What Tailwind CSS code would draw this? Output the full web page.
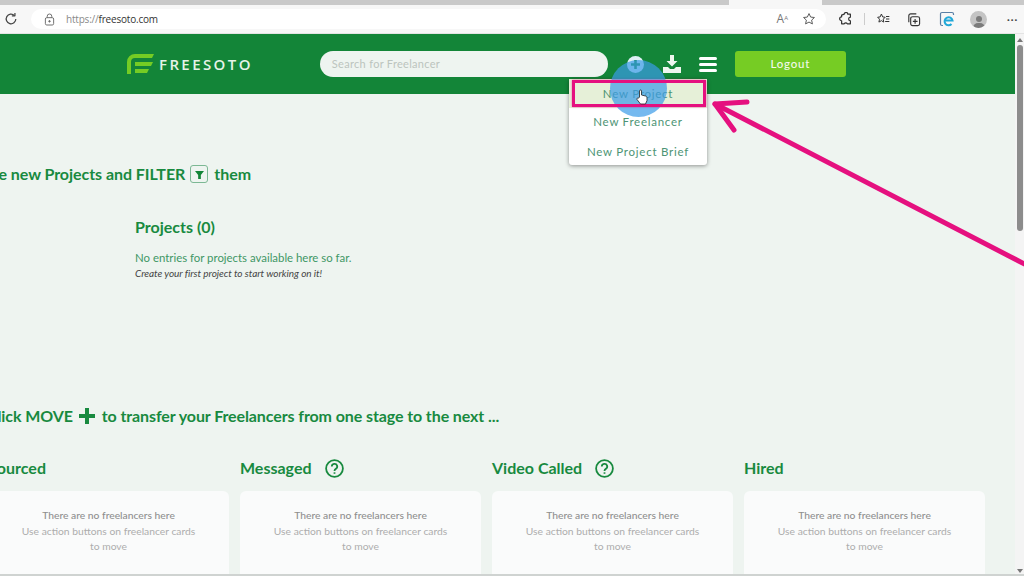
<!DOCTYPE html>
<html lang="en">
<head>
  <meta charset="UTF-8">
  <meta name="viewport" content="width=device-width, initial-scale=1.0">
  <title>Freesoto</title>
  <script src="https://cdn.jsdelivr.net/npm/@tailwindcss/browser@4"></script>
</head>
<body class="relative w-[1024px] h-[576px] overflow-hidden bg-[#eef4f0] font-['Lato',sans-serif]">

  <!-- Browser chrome -->
  <div class="h-[34px] bg-[#f7f7f7] border-b border-[#e4e4e4] flex flex-col">
    <div class="h-[5px] flex bg-[#c9c9c9]">
      <div class="w-[729px]"></div>
      <div class="w-[93px] bg-[#f7f7f7]"></div>
    </div>
    <div class="flex-1 flex items-center">
      <svg class="ml-[4px] w-[14px] h-[14px] text-[#444]" viewBox="0 0 16 16" fill="none" stroke="currentColor" stroke-width="1.4"><path d="M13.5 8a5.5 5.5 0 1 1-1.7-4"/><path d="M12.5 1v3.4H9" stroke-linejoin="round"/></svg>
      <div class="ml-[13px] w-[795px] h-[20px] bg-white rounded-full flex items-center pl-[13px] pr-[10px]">
        <svg class="w-[11px] h-[13px] text-[#666]" viewBox="0 0 12 14" fill="none" stroke="currentColor" stroke-width="1"><rect x="1.5" y="5" width="9" height="8" rx="1.5"/><path d="M3.5 5V3.5a2.5 2.5 0 0 1 5 0V5"/><circle cx="6" cy="9" r=".8" fill="currentColor"/></svg>
        <span class="ml-[11px] text-[10px] tracking-[-0.2px] font-['Open_Sans',sans-serif] text-[#8a8a8a]">https://<span class="text-[#333]">freesoto.com</span></span>
        <span class="ml-auto text-[12px] text-[#777] font-['Open_Sans',sans-serif]">A<sup class="text-[6px]">A</sup></span>
        <svg class="ml-[14px] w-[14px] h-[14px] text-[#555]" viewBox="0 0 16 16" fill="none" stroke="currentColor" stroke-width="1.1" stroke-linejoin="round"><path d="M8 1.8l1.9 4 4.3.5-3.2 3 .9 4.3L8 11.5l-3.9 2.1.9-4.3-3.2-3 4.3-.5z"/></svg>
      </div>
      <svg class="ml-[13px] w-[14px] h-[14px] text-[#333]" viewBox="0 0 16 16" fill="none" stroke="currentColor" stroke-width="1.4" stroke-linejoin="round"><path d="M6 2.5a2 2 0 0 1 4 0h3v3.5a2 2 0 0 0 0 4v3.5H9.500a2 2 0 0 0-3.500 0H3V10a2.200 2.200 0 0 1 0-4.500V3.500z"/></svg>
      <div class="ml-[11px] w-px h-[12px] bg-[#ccc]"></div>
      <svg class="ml-[11px] w-[15px] h-[14px] text-[#333]" viewBox="0 0 18 16" fill="none" stroke="currentColor" stroke-width="1.2" stroke-linejoin="round"><path d="M6.500 2l1.500 3.500 3 .4-2.300 2.300.6 3.500L6.500 10l-3 1.700.7-3.500L2 5.900l3-.4z"/><path d="M12 5h4M12 8h4M11 11h5"/></svg>
      <svg class="ml-[15px] w-[15px] h-[15px] text-[#333]" viewBox="0 0 16 16" fill="none" stroke="currentColor" stroke-width="1.2"><rect x="5" y="5" width="9.500" height="9.500" rx="2"/><path d="M3 11V4a2 2 0 0 1 2-2h6M9.700 7.500v5M7.300 10h5"/></svg>
      <svg class="ml-[18px] w-[16px] h-[16px]" viewBox="0 0 16 16" fill="none"><path d="M4 14.500H3A1.500 1.500 0 0 1 1.500 13V3A1.500 1.500 0 0 1 3 1.500h10A1.500 1.500 0 0 1 14.500 3v1" stroke="#5a7fa5" stroke-width="1.200"/><path d="M6 9.500h7.500A4 4 0 1 0 12.500 13" stroke="#21a8d8" stroke-width="2"/></svg>
      <div class="ml-[15px] w-[17px] h-[17px] rounded-full bg-[#c4c4c4] flex flex-col items-center justify-end overflow-hidden">
        <div class="w-[6px] h-[6px] rounded-full bg-[#7b7b7b]"></div>
        <div class="mt-[1px] w-[12px] h-[5px] rounded-t-full bg-[#7b7b7b]"></div>
      </div>
      <span class="ml-[20px] text-[10px] font-bold leading-none tracking-[1px] text-[#444]">···</span>
    </div>
  </div>

  <div class="flex h-[542px]">
    <div class="w-[1015px] flex flex-col overflow-hidden">
      <!-- Site header -->
      <header class="h-[60px] shrink-0 bg-[#138538] flex items-center">
        <svg class="ml-[127px] w-[27px] h-[20px]" viewBox="0 0 27 20" fill="#75cc24">
          <path d="M0 20V8a8 8 0 0 1 8-8h19l-2 4H8a4 4 0 0 0-4 4v12z"/>
          <path d="M8 8h18l-2 4H8zM8 15h14l-2 4H8z"/>
        </svg>
        <span class="ml-[5px] text-[15px] font-semibold tracking-[2.400px] text-[#e6f3e8] font-['Open_Sans',sans-serif]">FREESOTO</span>
        <div class="ml-[67px] w-[288px] h-[26px] rounded-full bg-[#eef4f0] flex items-center pl-[12px] text-[11px] tracking-[0.3px] text-[#bcc4be]">Search for Freelancer</div>
        <svg class="ml-[19px] w-[17px] h-[17px]" viewBox="0 0 17 17"><circle cx="8.500" cy="8.500" r="8.500" fill="#dff0f5"/><path d="M8.500 4v9M4 8.500h9" stroke="#138538" stroke-width="2.600"/></svg>
        <svg class="ml-[19px] w-[18px] h-[18px]" viewBox="0 0 18 18" fill="#eef6ef"><path d="M7 0h4v6h3.500L9 11.500 3.500 6H7z"/><path d="M0 12h5l2 2h4l2-2h5v6H0z"/></svg>
        <div class="ml-[18px] w-[18px] flex flex-col gap-[3px]">
          <div class="h-[3px] bg-white rounded-sm"></div>
          <div class="h-[3px] bg-white rounded-sm"></div>
          <div class="h-[3px] bg-white rounded-sm"></div>
        </div>
        <button class="ml-[18px] w-[111px] h-[26px] rounded-[3px] bg-[#76cc24] text-[11.500px] font-medium tracking-[0.8px] text-[#f2f9ea]">Logout</button>
      </header>

      <!-- Page content -->
      <main class="flex-1 flex flex-col">
        <div class="mt-[68px] w-[251px] h-[24px] flex justify-end items-center whitespace-nowrap text-[16px] font-bold leading-none tracking-[-0.05px] text-[#188a3f] overflow-hidden shrink-0">
          <span>Browse new Projects and FILTER</span>
          <span class="ml-[5px] mr-[6px] w-[18px] h-[18px] shrink-0 rounded-[3px] border border-[#7cb894] flex items-center justify-center">
            <svg class="w-[9px] h-[9px]" viewBox="0 0 10 10" fill="#138538"><path d="M0 1h10L6.500 5.500V10h-3V5.500z"/></svg>
          </span>
          <span>them</span>
        </div>

        <div class="ml-[135px] mt-[29px]">
          <h2 class="text-[16px] font-bold leading-[24px] text-[#188a3f]">Projects (0)</h2>
          <p class="mt-[11px] text-[11.400px] leading-[16px] text-[#3f9766]">No entries for projects available here so far.</p>
          <p class="text-[10px] leading-[14px] italic tracking-[-0.05px] text-[#444]">Create your first project to start working on it!</p>
        </div>

        <div class="mt-[124px] -ml-[13px] flex items-center whitespace-nowrap text-[16px] font-bold leading-[24px] tracking-[-0.1px] text-[#188a3f]">
          <span>Click MOVE</span>
          <svg class="ml-[6px] mr-[7px] w-[16px] h-[16px]" viewBox="0 0 16 16" fill="#188a3f"><path d="M6 0h4v6h6v4h-6v6H6v-6H0V6h6z"/></svg>
          <span>to transfer your Freelancers from one stage to the next ...</span>
        </div>

        <!-- Stage columns -->
        <div class="mt-[28px] -ml-[12px] w-[997px] grid grid-cols-4 gap-x-[11px]">
          <div>
            <h3 class="h-[24px] flex justify-end pr-[183px] text-[16px] font-bold leading-[24px] text-[#188a3f]">Sourced</h3>
            <div class="mt-[11px] h-[90px] rounded-t-[6px] bg-[#fafbfb] pt-[17px] px-[28px] text-center text-[10.300px] leading-[15.500px]">
              <p class="font-medium text-[#8f8f8f]">There are no freelancers here</p>
              <p class="text-[#adadad]">Use action buttons on freelancer cards to move</p>
            </div>
          </div>
          <div>
            <h3 class="h-[24px] flex items-center text-[16px] font-bold leading-[24px] text-[#188a3f]">Messaged
              <svg class="ml-[13px] w-[19px] h-[19px]" viewBox="0 0 19 19" fill="none" stroke="#188a3f" stroke-width="1.800"><circle cx="9.500" cy="9.500" r="8.400"/><path d="M6.800 7.500a2.700 2.700 0 1 1 4 2.400c-.9.500-1.300 1-1.300 2"/><path d="M9.500 13.300v1.500"/></svg>
            </h3>
            <div class="mt-[11px] h-[90px] rounded-t-[6px] bg-[#fafbfb] pt-[17px] px-[28px] text-center text-[10.300px] leading-[15.500px]">
              <p class="font-medium text-[#8f8f8f]">There are no freelancers here</p>
              <p class="text-[#adadad]">Use action buttons on freelancer cards to move</p>
            </div>
          </div>
          <div>
            <h3 class="h-[24px] flex items-center text-[16px] font-bold leading-[24px] text-[#188a3f]">Video Called
              <svg class="ml-[13px] w-[19px] h-[19px]" viewBox="0 0 19 19" fill="none" stroke="#188a3f" stroke-width="1.800"><circle cx="9.500" cy="9.500" r="8.400"/><path d="M6.800 7.500a2.700 2.700 0 1 1 4 2.400c-.9.500-1.300 1-1.300 2"/><path d="M9.500 13.300v1.500"/></svg>
            </h3>
            <div class="mt-[11px] h-[90px] rounded-t-[6px] bg-[#fafbfb] pt-[17px] px-[28px] text-center text-[10.300px] leading-[15.500px]">
              <p class="font-medium text-[#8f8f8f]">There are no freelancers here</p>
              <p class="text-[#adadad]">Use action buttons on freelancer cards to move</p>
            </div>
          </div>
          <div>
            <h3 class="h-[24px] flex items-center text-[16px] font-bold leading-[24px] text-[#188a3f]">Hired</h3>
            <div class="mt-[11px] h-[90px] rounded-t-[6px] bg-[#fafbfb] pt-[17px] px-[28px] text-center text-[10.300px] leading-[15.500px]">
              <p class="font-medium text-[#8f8f8f]">There are no freelancers here</p>
              <p class="text-[#adadad]">Use action buttons on freelancer cards to move</p>
            </div>
          </div>
        </div>
      </main>
    </div>

    <!-- Scrollbar -->
    <div class="w-[9px] bg-[#f4f4f4] flex flex-col items-center pt-[4px] pb-[3px]">
      <div class="w-0 h-0 border-x-[3px] border-x-transparent border-b-[4px] border-b-[#777]"></div>
      <div class="mt-[3px] w-[6px] h-[186px] rounded-full bg-[#8c8c8c]"></div>
      <div class="mt-auto w-0 h-0 border-x-[3px] border-x-transparent border-t-[4px] border-t-[#777]"></div>
    </div>
  </div>

  <!-- Bottom edge of the recording -->
  <div class="absolute left-0 bottom-0 w-full h-[2px] bg-[#cfd3d1]"></div>

  <!-- Dropdown menu -->
  <div class="absolute left-[569px] top-[79px] w-[138px] h-[86px] rounded-[3px] bg-white shadow-[0_1px_4px_rgba(0,0,0,0.4)] flex flex-col items-center text-[11.500px] tracking-[0.75px] text-[#4d9474]">
    <div class="w-full h-[29px] bg-[#e6f0d8] flex items-center justify-center">New Project</div>
    <div class="h-[29px] flex items-center">New Freelancer</div>
    <div class="h-[29px] flex items-center pt-[1px]">New Project Brief</div>
  </div>

  <!-- Click highlight, callout and cursor -->
  <div class="absolute left-[610px] top-[60px] w-[57px] h-[57px] rounded-full bg-[#3b9be8]/70"></div>
  <div class="absolute left-[572px] top-[80px] w-[134px] h-[27px] border-[3px] border-[#e5107f] shadow-[0_0_2px_rgba(229,16,127,0.6)]"></div>
  <svg class="absolute left-[708px] top-[96px] w-[316px] h-[175px]" viewBox="0 0 316 175" fill="none" stroke="#e5107f" stroke-width="5" stroke-linecap="round" stroke-linejoin="round">
    <path d="M7 8L330 175"/>
    <path d="M39 6L7 8L26 34"/>
  </svg>
  <svg class="absolute left-[636px] top-[89px] w-[12px] h-[16px]" viewBox="0 0 12 16" fill="#fff" stroke="#222" stroke-width=".8" stroke-linejoin="round"><path d="M3.500 8V2a1 1 0 0 1 2 0v4l4 1c1 .3 1.500 1 1.500 2v2.500L9.500 15H4.500L1 10.500c-.5-1 .8-2 1.500-1.300z"/></svg>
</body>
</html>
